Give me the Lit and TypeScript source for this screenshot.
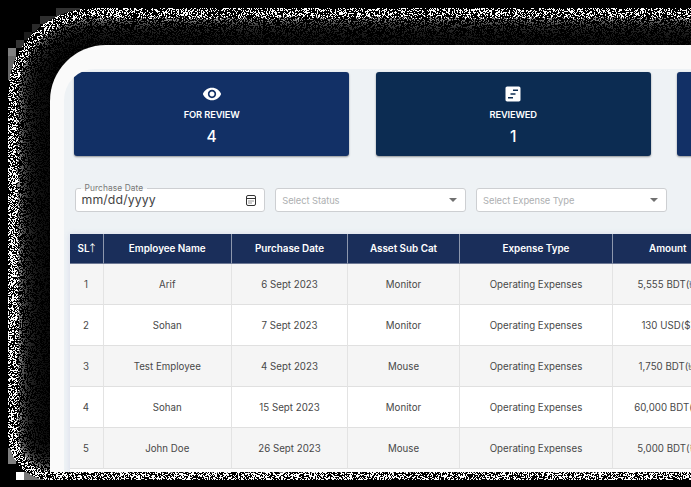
import { LitElement, html, css, svg } from "lit";
import { customElement, property } from "lit/decorators.js";

const EYE = svg`<path d="M12 4.5C7 4.5 2.73 7.61 1 12c1.73 4.39 6 7.5 11 7.5s9.27-3.11 11-7.5c-1.73-4.39-6-7.5-11-7.5zM12 17c-2.76 0-5-2.24-5-5s2.24-5 5-5 5 2.24 5 5-2.24 5-5 5zm0-8c-1.66 0-3 1.34-3 3s1.34 3 3 3 3-1.34 3-3-1.34-3-3-3z"/>`;
const CHART = svg`<path fill-rule="evenodd" d="M19 3H5c-1.1 0-2 .9-2 2v14c0 1.1.9 2 2 2h14c1.1 0 2-.9 2-2V5c0-1.1-.9-2-2-2zM12 17.300H6v-1.800h6v1.800zm3-4.400H9v-1.800h6v1.800zm3-4.400h-6v-1.800h6v1.800z"/>`;

/** Dithered shadow that surrounds the device frame. */
@customElement("grain-shadow")
export class GrainShadow extends LitElement {
  static styles = css`
    :host { display: block; }
    canvas { display: block; }
  `;

  render() {
    return html`<canvas width="691" height="487"></canvas>`;
  }

  firstUpdated() {
    const canvas = this.renderRoot.querySelector("canvas")!;
    const ctx = canvas.getContext("2d")!;
    const w = 691, h = 487;
    ctx.fillStyle = "#000";
    ctx.fillRect(0, 0, w, h);
    const blocks: [number, number, number, number, number][] = [
      [56, 8, 24, 8, 50], [40, 16, 16, 8, 46], [32, 24, 8, 8, 42],
      [24, 32, 8, 8, 28], [16, 40, 8, 8, 52], [8, 48, 8, 8, 128], [8, 56, 8, 24, 104],
      [8, 448, 8, 16, 128], [16, 472, 8, 8, 255], [24, 472, 24, 8, 120],
    ];
    for (const [x, y, bw, bh, c] of blocks) {
      ctx.fillStyle = `rgb(${c},${c},${c})`;
      ctx.fillRect(x, y, bw, bh);
    }
    const img = ctx.getImageData(0, 0, w, h);
    let seed = 20231;
    const rnd = () => {
      seed = (seed * 1664525 + 1013904223) >>> 0;
      return seed / 4294967296;
    };
    const depth = (x: number, y: number) => {
      const l = x - 8, t = y - 8, b = 480 - y;
      if (l < 0 || t < 0 || b <= 0) return -1;
      const R = 84, r = 44;
      if (l < R && t < R) return R - Math.hypot(R - l, R - t);
      if (l < r && b < r) return r - Math.hypot(r - l, r - b);
      return Math.min(l, t, b);
    };
    for (let y = 0; y < h; y++) {
      for (let x = 0; x < w; x++) {
        const d = depth(x, y);
        if (d < 0) continue;
        const n = Math.max(1, Math.floor(0.3 + (d * d) / 70 + rnd()));
        const v = rnd() < (y < 80 ? 0.38 : 0.46) ? 255 / n : 0;
        const i = (y * w + x) * 4;
        img.data[i] = img.data[i + 1] = img.data[i + 2] = v;
      }
    }
    ctx.putImageData(img, 0, 0);
  }
}

@customElement("stat-card")
export class StatCard extends LitElement {
  @property() label = "";
  @property() value = "";
  @property() icon = "";
  static styles = css`
    :host {
      display: flex; flex-direction: column; align-items: center; flex: none;
      box-sizing: border-box; width: 275px; height: 84px; padding-top: 12px;
      border-radius: 3px; background: #123066; color: #fff;
      box-shadow: 0 1px 2px #0006;
    }
    :host([dark]) { background: #0c2c52; }
    svg { width: 20px; height: 20px; fill: #fff; flex: none; }
    .label { font-size: 9.3px; line-height: 14px; font-weight: 600; letter-spacing: -0.13px; margin-top: 4px; white-space: nowrap; }
    .value { font-size: 15.500px; line-height: 20px; font-weight: 500; margin-top: 5px; }
  `;
  render() {
    return html`
      <svg viewBox="0 0 24 24">${this.icon === "eye" ? EYE : this.icon === "chart" ? CHART : ""}</svg>
      <div class="label">${this.label}</div>
      <div class="value">${this.value}</div>`;
  }
}

@customElement("app-root")
export class AppRoot extends LitElement {
  static styles = css`
    :host {
      display: block; position: relative; width: 691px; height: 487px; overflow: hidden;
      background: #000; font-family: Inter, "Open Sans", "Liberation Sans", sans-serif;
    }
    .shadow { position: absolute; inset: 0; }
    .stage { position: relative; padding: 45px 0 0 50px; }
    .device {
      box-sizing: border-box; height: 427px; padding: 24px 0 0 14px; overflow: hidden;
      background: #fafafa; border-top-left-radius: 56px;
    }
    .screen {
      box-sizing: border-box; height: 403px; padding: 3px 0 0 5px; overflow: hidden;
      background: #eef2f5; border-top-left-radius: 31px;
    }
    .cards { display: flex; gap: 26.500px; margin-left: 5.200px; }
    .filters { display: flex; gap: 10.300px; margin: 32px 0 0 5.500px; }
    .field {
      position: relative; display: flex; align-items: center; justify-content: space-between;
      flex: none; box-sizing: border-box; width: 190.500px; height: 24px; padding: 0 8px 0 6px;
      background: #fff; border: 1px solid #cdcfd2; border-radius: 3px;
      color: #adafb1; font-size: 9.4px; letter-spacing: -0.08px; white-space: nowrap;
    }
    .date { color: #444; font-size: 12.3px; letter-spacing: 0.12px; padding-right: 7px; }
    .date-text { margin-top: -2px; }
    .legend {
      position: absolute; left: 5px; top: -6px; padding: 0 4px; height: 10px; line-height: 10px;
      font-size: 8.4px; letter-spacing: 0.08px; color: #777;
      background: linear-gradient(#eef2f5 6px, #fff 6px);
    }
    .cal { width: 12px; height: 13px; fill: none; stroke: #333; }
    .caret { border: 4px solid transparent; border-top-color: #707070; border-bottom: 0; }
    .table {
      width: 655px; margin-top: 22px; margin-left: 0.500px; background: #fff;
      box-shadow: 0 0 6px #7c86c833; height: 240px;
    }
    .row {
      display: grid; grid-template-columns: 34px 128.500px 116px 112px 153px 111.500px;
      height: 41px; color: #484848; font-size: 9.7px; letter-spacing: 0.02px;
    }
    .row.odd { background: #f5f5f5; }
    .row.head { height: 30px; background: #1a2e5a; color: #fff; font-size: 9.9px; letter-spacing: -0.02px; font-weight: 600; }
    .cell {
      display: flex; align-items: center; justify-content: center; box-sizing: border-box;
      border-right: 1px solid #e3e3e3; border-bottom: 1px solid #e0e0e0; white-space: nowrap;
      line-height: 14px; padding-top: 2px;
    }
    .text { display: block; height: 14px; }
    .cell:last-child { padding-right: 1px; }
    .head .cell { border-right-color: #8d97ad; border-bottom-color: #6d7894; padding-top: 0; padding-bottom: 1px; }
    .arrow { font-family: "Noto Sans CJK JP", "DejaVu Sans", sans-serif; font-weight: 400; width: 5px; text-indent: -2px; line-height: 12px; }
  `;

  private heads = ["SL", "Employee Name", "Purchase Date", "Asset Sub Cat", "Expense Type", "Amount"];
  private rows = [
    ["1", "Arif", "6 Sept 2023", "Monitor", "Operating Expenses", "5,555 BDT(৳)"],
    ["2", "Sohan", "7 Sept 2023", "Monitor", "Operating Expenses", "130 USD($)"],
    ["3", "Test Employee", "4 Sept 2023", "Mouse", "Operating Expenses", "1,750 BDT(৳)"],
    ["4", "Sohan", "15 Sept 2023", "Monitor", "Operating Expenses", "60,000 BDT(৳)"],
    ["5", "John Doe", "26 Sept 2023", "Mouse", "Operating Expenses", "5,000 BDT(৳)"],
  ];

  render() {
    return html`
      <grain-shadow class="shadow"></grain-shadow>
      <div class="stage">
        <div class="device">
          <div class="screen">
            <div class="cards">
              <stat-card icon="eye" label="FOR REVIEW" value="4"></stat-card>
              <stat-card dark icon="chart" label="REVIEWED" value="1"></stat-card>
              <stat-card></stat-card>
            </div>
            <div class="filters">
              <div class="field date">
                <span class="legend">Purchase Date</span>
                <span class="date-text">mm/dd/yyyy</span>
                <svg class="cal" viewBox="0 0 12 13">
                  <rect x="1.500" y="1.500" width="9" height="10" rx="1.500"></rect>
                  <path d="M1.500 4.500h9M3.500 7h1M5.500 7h1M7.500 7h1M3.500 9h1M5.500 9h1"></path>
                </svg>
              </div>
              <div class="field"><span>Select Status</span><i class="caret"></i></div>
              <div class="field"><span>Select Expense Type</span><i class="caret"></i></div>
            </div>
            <div class="table">
              <div class="row head">
                ${this.heads.map((h, i) => html`<div class="cell">${h}${i === 0 ? html`<span class="arrow">↑</span>` : ""}</div>`)}
              </div>
              ${this.rows.map((r, i) => html`
                <div class="row ${i % 2 ? "" : "odd"}">${r.map((c) => html`<div class="cell"><span class="text">${c}</span></div>`)}</div>`)}
            </div>
          </div>
        </div>
      </div>`;
  }
}
